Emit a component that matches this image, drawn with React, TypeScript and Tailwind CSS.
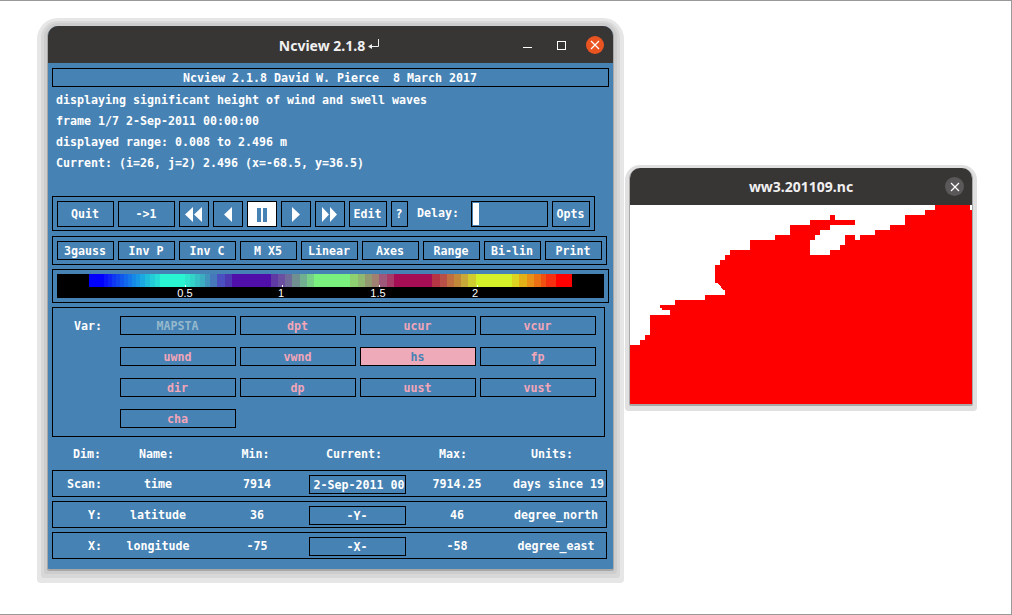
import React from "react";

const BANDS: [number, number, string][] = [
  [89, 104, "#0000ff"], [104, 108, "#0a14fb"], [108, 112, "#0c24f6"], [112, 116, "#0e38f2"], [116, 120, "#1048ee"],
  [120, 124, "#1058ec"], [124, 128, "#1268ea"], [128, 132, "#1478e8"], [132, 136, "#1688e6"], [136, 140, "#1898e4"],
  [140, 145, "#1ca8e0"], [145, 150, "#20bcdc"], [150, 155, "#24ccd8"], [155, 160, "#26dcd4"], [160, 185, "#2af5d2"],
  [185, 190, "#2ee4cc"], [190, 195, "#32d4c8"], [195, 200, "#36c0c4"], [200, 205, "#3cacc0"], [205, 210, "#4094bc"],
  [210, 217, "#4678bc"], [217, 225, "#4a50bf"], [225, 232, "#4c38b0"], [232, 271, "#4f0fa8"], [271, 278, "#5f3aa5"],
  [278, 285, "#6b4fa0"], [285, 292, "#6f6a9a"], [292, 300, "#6f8f90"], [300, 307, "#70b090"], [307, 314, "#78d088"],
  [314, 350, "#7af07f"], [350, 358, "#8fd070"], [358, 365, "#90b870"], [365, 372, "#929870"], [372, 379, "#a08070"],
  [379, 387, "#a0587a"], [387, 394, "#a83a68"], [394, 432, "#a50e55"], [432, 440, "#b53545"], [440, 447, "#b85048"],
  [447, 454, "#c07040"], [454, 461, "#c08838"], [461, 468, "#c8a838"], [468, 476, "#d0cc30"], [476, 512, "#d4f028"],
  [512, 519, "#dcd420"], [519, 527, "#e4b018"], [527, 534, "#e89018"], [534, 541, "#ec7014"], [541, 546, "#f05010"],
  [546, 556, "#f43010"], [556, 572, "#ff0000"],
];

const TICKS: [number, number, string][] = [
  [185, 185, "0.5"], [282, 281, "1"], [379, 378, "1.5"], [477, 475, "2"],
];

// traced in screen pixels, moved to the image's origin by the svg's viewBox
const RED_SHAPE =
  "630,345 640,345 640,340 645,340 645,335 650,335 650,315 670,315 670,310 662,310 662,308 660,308 660,305 675,305 675,300 705,300 705,295 725,295 725,290 723,290 721,287 719,285 717,283 715,283 715,265 720,265 720,260 725,260 725,255 730,255 730,250 750,250 750,240 775,240 775,235 790,235 790,225 810,225 810,220 830,220 830,215 835,215 835,220 855,220 855,225 830,225 830,230 820,230 820,235 815,235 815,240 810,240 810,255 830,255 830,250 840,250 840,245 845,245 845,235 855,235 855,240 860,240 860,235 875,235 875,230 890,230 890,225 905,225 905,215 925,215 925,210 935,210 935,205 970,205 970,210 972,210 972,404 630,404";

const VARS = [
  ["MAPSTA", "dpt", "ucur", "vcur"],
  ["uwnd", "vwnd", "hs", "fp"],
  ["dir", "dp", "uust", "vust"],
  ["cha"],
];

const OPTIONS = ["3gauss", "Inv P", "Inv C", "M X5", "Linear", "Axes", "Range", "Bi-lin", "Print"];

function Btn({ children, className = "" }: { children: React.ReactNode; className?: string }) {
  return <div className={`flex items-center justify-center border border-black whitespace-pre pr-px pt-[2px] ${className}`}>{children}</div>;
}

function DimRow({ label, name, min, current, max, units }: { label: string; name: string; min: string; current: string; max: string; units: string }) {
  const scan = label === "Scan:";
  return (
    <div className="flex items-center h-[27px] w-[555px] border border-black">
      <div className="w-[50px] text-right pr-px pt-[2px]">{label}</div>
      <div className="w-[110px] text-center pt-[2px]">{name}</div>
      <div className="w-[88px] text-center pt-[2px]">{min}</div>
      <Btn className={scan ? "w-[97px] h-[19px] ml-[8px] mt-[2px] pl-[4px] overflow-hidden" : "w-[97px] h-[19px] ml-[8px] mt-[2px] overflow-hidden"}>{current}</Btn>
      <div className="w-[102px] text-center pt-[2px]">{max}</div>
      <div className={scan ? "w-[96px] pl-[5px] pt-[2px] whitespace-pre overflow-hidden" : "w-[96px] pt-[2px] text-center whitespace-pre overflow-hidden"}>{units}</div>
    </div>
  );
}

export default function App() {
  return (
    <div className="relative w-[1012px] h-[615px] overflow-hidden bg-white border-t border-r border-b border-[#999999]">
      {/* main window */}
      <div className="absolute left-[48px] top-[25px] w-[565px] h-[543px] flex flex-col rounded-t-[10px] rounded-b-[1px] bg-[#4682b4] shadow-[0_1px_0_1px_#a8a8a8,0_1px_0_4px_#cdcdcd,0_2px_0_7px_#d8d8d8,0_3px_0_11px_#e6e6e6]">
        <div className="relative h-[37px] shrink-0 flex items-center justify-center gap-[3px] pt-[2px] pr-[2px] rounded-t-[10px] bg-[#383535] text-[#f0f0f0] font-['Noto_Sans',sans-serif] font-bold text-[14px]">
          <span>Ncview 2.1.8</span>
          <svg width="12" height="10" viewBox="0 0 12 10" className="mt-[-3px]">
            <path d="M10.5 0V7.5H3" stroke="#f0f0f0" strokeWidth="1" fill="none" />
            <path d="M0 7.5L4 5V10Z" fill="#f0f0f0" />
          </svg>
          <div className="absolute left-[475px] top-[21px] w-[9px] h-px bg-white"></div>
          <div className="absolute left-[509px] top-[15px] w-[9px] h-[9px] border border-white"></div>
          <div className="absolute left-[538px] top-[10px] w-[18px] h-[18px] rounded-full bg-[#e95420] flex items-center justify-center">
            <svg width="10" height="10" viewBox="0 0 10 10"><path d="M1 1L9 9M9 1L1 9" stroke="#ffffff" strokeWidth="1.2" /></svg>
          </div>
        </div>

        <div className="flex-1 px-[4px] pt-[5px] text-white font-['DejaVu_Sans_Mono',monospace] font-bold text-[11.63px] leading-[21px]">
          <Btn className="w-[557px] h-[19px]">{"Ncview 2.1.8 David W. Pierce  8 March 2017"}</Btn>

          <div className="pl-[4px] pt-[3px] h-[109px] whitespace-pre">
            <div>displaying significant height of wind and swell waves</div>
            <div>frame 1/7 2-Sep-2011 00:00:00</div>
            <div>displayed range: 0.008 to 2.496 m</div>
            <div>Current: (i=26, j=2) 2.496 (x=-68.5, y=36.5)</div>
          </div>

          <div className="flex items-center gap-[4px] w-[543px] h-[35px] pl-[4px] border border-black">
            <Btn className="w-[57px] h-[26px]">Quit</Btn>
            <Btn className="w-[57px] h-[26px]">{"->1"}</Btn>
            <Btn className="w-[30px] h-[26px]">
              <svg width="17" height="15" viewBox="0 0 17 15"><path d="M8 0V15L0 7.5ZM17 0V15L9 7.5Z" fill="#ffffff" /></svg>
            </Btn>
            <Btn className="w-[30px] h-[26px]">
              <svg width="8" height="15" viewBox="0 0 8 15"><path d="M8 0V15L0 7.5Z" fill="#ffffff" /></svg>
            </Btn>
            <Btn className="w-[30px] h-[26px] bg-white gap-[2px]">
              <div className="w-[4px] h-[14px] bg-[#4682b4]"></div>
              <div className="w-[4px] h-[14px] bg-[#4682b4]"></div>
            </Btn>
            <Btn className="w-[30px] h-[26px]">
              <svg width="8" height="15" viewBox="0 0 8 15"><path d="M0 0V15L8 7.5Z" fill="#ffffff" /></svg>
            </Btn>
            <Btn className="w-[30px] h-[26px]">
              <svg width="15" height="15" viewBox="0 0 15 15"><path d="M0 0V15L7 7.5ZM8 0V15L15 7.5Z" fill="#ffffff" /></svg>
            </Btn>
            <Btn className="w-[38px] h-[26px]">Edit</Btn>
            <Btn className="w-[17px] h-[26px]">?</Btn>
            <div className="w-[42px] ml-[5px] mr-[8px]">Delay:</div>
            <div className="flex items-stretch w-[77px] h-[26px] border border-black p-px">
              <div className="w-[6px] bg-white"></div>
            </div>
            <Btn className="w-[38px] h-[26px]">Opts</Btn>
          </div>

          <div className="flex items-center gap-[4px] w-[555px] h-[29px] mt-[5px] pl-[4px] border border-black">
            {OPTIONS.map((o) => (
              <Btn key={o} className="w-[57px] h-[19px]">{o}</Btn>
            ))}
          </div>

          <div className="w-[557px] h-[34px] mt-[4px] p-[4px] border border-black">
            <svg width="547" height="24" viewBox="57 274 547 24" className="block">
              <rect x="57" y="274" width="547" height="24" fill="#000000" />
              {BANDS.map(([a, b, c]) => (
                <rect key={a} x={a} y="274" width={b - a} height="13" fill={c} />
              ))}
              {TICKS.map(([t, l, s]) => (
                <g key={s}>
                  <rect x={t} y="285" width="1" height="2" fill="#ffffff" />
                  <text x={l} y="297" textAnchor="middle" fill="#ffffff" className="font-['Liberation_Sans',sans-serif] font-normal text-[11px]">{s}</text>
                </g>
              ))}
            </svg>
          </div>

          <div className="flex w-[553px] h-[130px] mt-[4px] pt-[8px] border border-black">
            <div className="w-[49px] ml-[21px] mr-[-3px] pt-px leading-[19px]">Var:</div>
            <div className="flex flex-col gap-[12px]">
              {VARS.map((row) => (
                <div key={row[0]} className="flex gap-[4px]">
                  {row.map((v) => (
                    <Btn
                      key={v}
                      className={
                        v === "hs"
                          ? "w-[116px] h-[19px] bg-[#eeaab8] text-[#4682b4]"
                          : v === "MAPSTA"
                            ? "w-[116px] h-[19px] text-[#95b9cc]"
                            : "w-[116px] h-[19px] text-[#f2a6b8]"
                      }
                    >
                      {v}
                    </Btn>
                  ))}
                </div>
              ))}
            </div>
          </div>

          <div className="flex items-center h-[33px] pt-[2px]">
            <div className="w-[49px] text-right">Dim:</div>
            <div className="w-[111px] text-center">Name:</div>
            <div className="w-[87px] text-center">Min:</div>
            <div className="w-[110px] text-center">Current:</div>
            <div className="w-[88px] text-center">Max:</div>
            <div className="w-[110px] text-center">Units:</div>
          </div>

          <div className="flex flex-col gap-[4px]">
            <DimRow label="Scan:" name="time" min="7914" current="2-Sep-2011 00" max="7914.25" units="days since 19" />
            <DimRow label="Y:" name="latitude" min="36" current="-Y-" max="46" units="degree_north" />
            <DimRow label="X:" name="longitude" min="-75" current="-X-" max="-58" units="degree_east" />
          </div>
        </div>
      </div>

      {/* map window */}
      <div className="absolute left-[630px] top-[167px] w-[342px] h-[236px] flex flex-col rounded-t-[10px] rounded-b-[1px] bg-white shadow-[0_1px_0_1px_#a8a8a8,0_2px_0_5px_#e0e0e0]">
        <div className="relative h-[37px] shrink-0 flex items-center justify-center rounded-t-[10px] bg-[#383535] text-[#f0f0f0] font-['Noto_Sans',sans-serif] font-bold text-[14px]">
          ww3.201109.nc
          <div className="absolute left-[315px] top-[9px] w-[19px] h-[19px] rounded-full bg-[#5a5858] flex items-center justify-center">
            <svg width="10" height="10" viewBox="0 0 10 10"><path d="M1 1L9 9M9 1L1 9" stroke="#ffffff" strokeWidth="1.2" /></svg>
          </div>
        </div>
        <svg width="342" height="199" viewBox="630 205 342 199" className="block" shapeRendering="crispEdges">
          <polygon points={RED_SHAPE} fill="#ff0000" />
        </svg>
      </div>
    </div>
  );
}
